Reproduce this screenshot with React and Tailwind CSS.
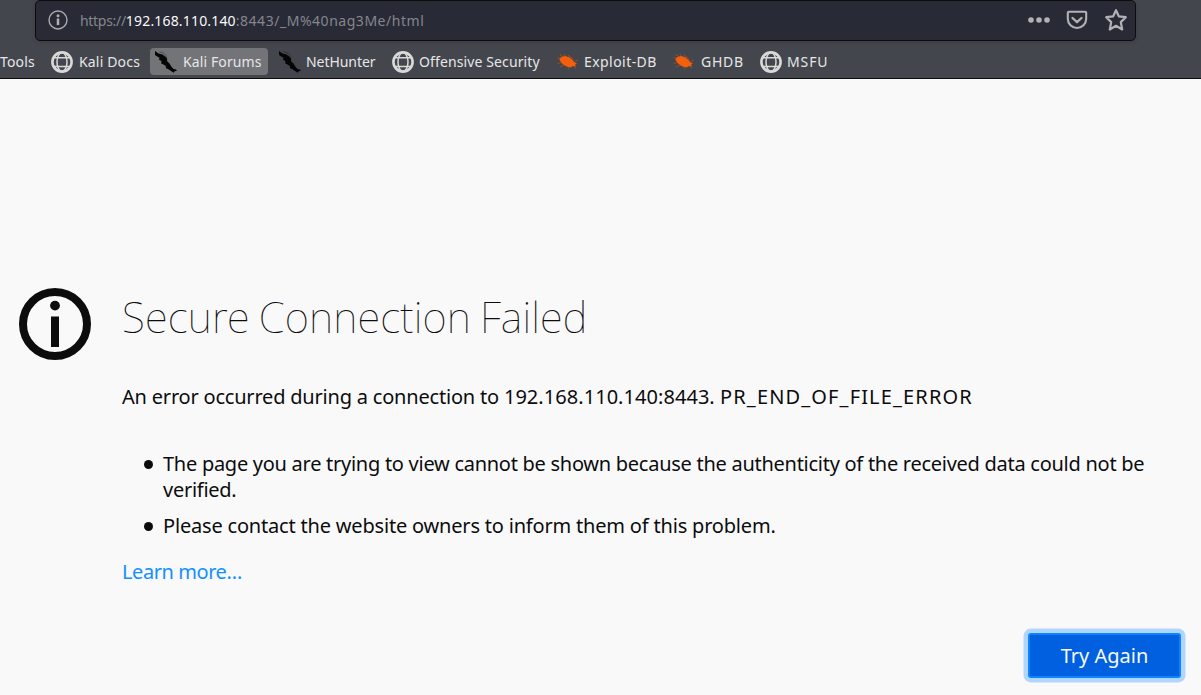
import React from "react";

const Globe = () => (
  <svg viewBox="0 0 22 22" className="h-[22px] w-[22px] shrink-0" fill="none" stroke="#d9d9d8">
    <circle cx="11" cy="11" r="9.6" strokeWidth="2.6" />
    <ellipse cx="11" cy="11" rx="5" ry="9.4" strokeWidth="1.5" />
    <path d="M3 6.7H19M3 15.5H19" strokeWidth="1.5" />
  </svg>
);

const Dragon = () => (
  <svg viewBox="0 0 22 22" className="h-[22px] w-[22px] shrink-0">
    <path d="M0 0L3.5 2.4L7.5 3.4L10.5 5.8L12.2 7.8L12 10L14.5 12.5L16.3 15.5L18.5 18L21 18.6L22 19.8L19.6 20.2L18.8 21.8L16 20L13.5 18.2L11 17.3L10.8 15L8 13.2L6.2 12.5L6.4 10L4 8.8L4.5 6.8L2.2 5.6L0 4Z" fill="#050505" />
    <path d="M4.5 .8Q9 1.4 10.8 4.2L11.8 6.8" fill="none" stroke="#17191b" strokeWidth=".8" opacity=".5" />
  </svg>
);

const Bug = () => (
  <svg viewBox="0 0 22 22" className="h-[22px] w-[22px] shrink-0">
    <path d="M.5 6.5L5 8M3 3.5L7 7M7 3L9 6M11 4L14 7M14 6L17 10M.5 12.5L5 11.5M3 16L8 13.5M11 15L11.5 18.5M16 14L19 17M18 10.5L21 9" stroke="#c04f18" strokeWidth="1.1" opacity=".6" />
    <path d="M2.3 8.5L4 6.2L8 5L12 6.2L15 8.5L17 11L20 12.4L18.2 13.6L18.6 15.6L16 15L13.5 16.4L9 15.2L5.5 13L3.5 10.5Z" fill="#f2600c" />
  </svg>
);

const icons = { globe: Globe, dragon: Dragon, bug: Bug };

const bookmarks = [
  { label: "Kali Docs", icon: "globe", box: "w-[105px] pl-[6px] gap-[6px]", text: "tracking-[0.17px]" },
  { label: "Kali Forums", icon: "dragon", box: "w-[118px] pl-[5px] gap-[6px] bg-[#737477]", text: "tracking-[0.11px]" },
  { label: "NetHunter", icon: "dragon", box: "w-[118px] pl-[11px] gap-[5px]", text: "tracking-[-0.05px]" },
  { label: "Offensive Security", icon: "globe", box: "w-[165px] pl-[6px] gap-[5px]", text: "tracking-[0.12px]" },
  { label: "Exploit-DB", icon: "bug", box: "w-[116px] pl-[6px] gap-[5px]", text: "tracking-[0.44px]" },
  { label: "GHDB", icon: "bug", box: "w-[87px] pl-[6px] gap-[6px]", text: "tracking-[0.7px]" },
  { label: "MSFU", icon: "globe", box: "w-[90px] pl-[6px] gap-[5px]", text: "tracking-[0.9px]" },
];

function AddressBar() {
  return (
    <div className="ml-[35px] flex h-[41px] w-[1101px] items-center rounded-[5px] border border-[#0c0c0d] bg-[#282a36] pr-[7px] pb-px pl-[12px] shadow-[0_1px_4px_rgba(0,0,0,0.15)]">
      <svg viewBox="0 0 20 20" className="h-5 w-5 shrink-0" fill="none">
        <circle cx="10" cy="10" r="9" stroke="#a9aaaf" strokeWidth="1.4" />
        <circle cx="10" cy="5.8" r="1.5" fill="#b1b2b5" />
        <path d="M10 8.5V15" stroke="#b1b2b5" strokeWidth="2.5" />
      </svg>
      <div className="ml-3 flex-1 text-[14px] whitespace-nowrap text-[#85868d]">
        <span className="tracking-[-0.3px]">https://</span>
        <span className="tracking-[0.17px] text-[#f9f9fa]">192.168.110.140</span>
        <span className="tracking-[0.53px]">:8443/_M%40nag3Me/html</span>
      </div>
      <svg viewBox="0 0 24 8" className="mr-[15px] h-2 w-6" fill="#b1b2b5">
        <circle cx="4" cy="4" r="2.8" />
        <circle cx="12" cy="4" r="2.8" />
        <circle cx="20" cy="4" r="2.8" />
      </svg>
      <svg viewBox="0 0 22 20" className="mr-4 h-5 w-[22px]" fill="none" stroke="#b1b2b5" strokeLinecap="round" strokeLinejoin="round">
        <path d="M2.8 1.8H19.2Q20.2 1.8 20.2 2.8V8.8A9.2 9.2 0 0 1 1.8 8.8V2.8Q1.8 1.8 2.8 1.8Z" strokeWidth="2.1" />
        <path d="M6.5 8L11 12.2L15.5 8" strokeWidth="2.3" />
      </svg>
      <svg viewBox="0 0 24 24" className="h-6 w-6" fill="none" stroke="#b1b2b5" strokeWidth="2.2" strokeLinejoin="round">
        <path d="M12 2.2L14.8 8.3L21.8 9.2L16.8 14.1L18.2 21.5L12 17.8L5.8 21.5L7.2 14.1L2.2 9.2L9.2 8.3Z" />
      </svg>
    </div>
  );
}

export default function App() {
  return (
    <div className="flex h-[695px] w-[1201px] flex-col overflow-hidden bg-[#f9f9fa] font-['Noto_Sans',sans-serif] text-[#0c0c0d]">
      <header className="h-[79px] shrink-0 border-b border-[#0c0c0d] bg-[#44464d]">
        <AddressBar />
        <nav className="flex h-[41px] items-center text-[14px] whitespace-nowrap text-[#e6e6e8]">
          <span className="w-[45px] tracking-[0.15px]">Tools</span>
          {bookmarks.map(({ label, icon, box, text }) => {
            const Icon = icons[icon];
            return (
              <a key={label} className={`flex h-[27px] shrink-0 items-center rounded-[4px] ${box}`}>
                <Icon />
                <span className={text}>{label}</span>
              </a>
            );
          })}
        </nav>
      </header>
      <main className="flex flex-1 flex-col pt-[209px]">
        <div className="flex">
          <svg viewBox="0 0 72 72" className="ml-[19px] h-[72px] w-[72px] shrink-0">
            <circle cx="36" cy="36" r="32" fill="none" stroke="#0c0c0d" strokeWidth="8" />
            <circle cx="36" cy="17.6" r="4.9" fill="#0c0c0d" />
            <path d="M32 28.5H40V59H32Z" fill="#0c0c0d" />
          </svg>
          <div className="ml-[31px] w-[1063px] text-[20px] leading-[26px] whitespace-nowrap">
            <h1 className="h-[96px] text-[42px] leading-[58px] font-thin">
              <span className="[word-spacing:-2px] tracking-[0.13px]">Secure Connection Failed</span>
            </h1>
            <p>
              <span className="tracking-[-0.2px]">An error occurred during a connection to </span>
              <span className="tracking-[0.05px]">192.168.110.140:8443. </span>
              <span className="tracking-[1.15px]">PR_END_OF_FILE_ERROR</span>
            </p>
            <ul className="mt-[41px] flex flex-col gap-[10px]">
              <li className="flex">
                <i className="mt-[9px] mr-[10px] ml-[22px] h-[9px] w-[9px] shrink-0 rounded-full bg-[#0c0c0d]" />
                <span className="tracking-[-0.27px]">
                  The page you are trying to view cannot be shown because the authenticity of the received data could not be
                  <br />
                  verified.
                </span>
              </li>
              <li className="flex">
                <i className="mt-[9px] mr-[10px] ml-[22px] h-[9px] w-[9px] shrink-0 rounded-full bg-[#0c0c0d]" />
                <span className="tracking-[-0.19px]">Please contact the website owners to inform them of this problem.</span>
              </li>
            </ul>
            <a className="mt-5 block text-[#1290ff]">
              <span className="tracking-[-0.43px]">Learn more…</span>
            </a>
          </div>
        </div>
        <button className="mt-[48px] mr-[20px] h-[45px] w-[153px] self-end rounded-[3px] border-2 border-[#0a84ff] bg-[#0060df] text-[20px] text-[#f9f9fa] shadow-[0_0_0_4.5px_#b0d6fd]">
          <span>Try Again</span>
        </button>
      </main>
    </div>
  );
}
